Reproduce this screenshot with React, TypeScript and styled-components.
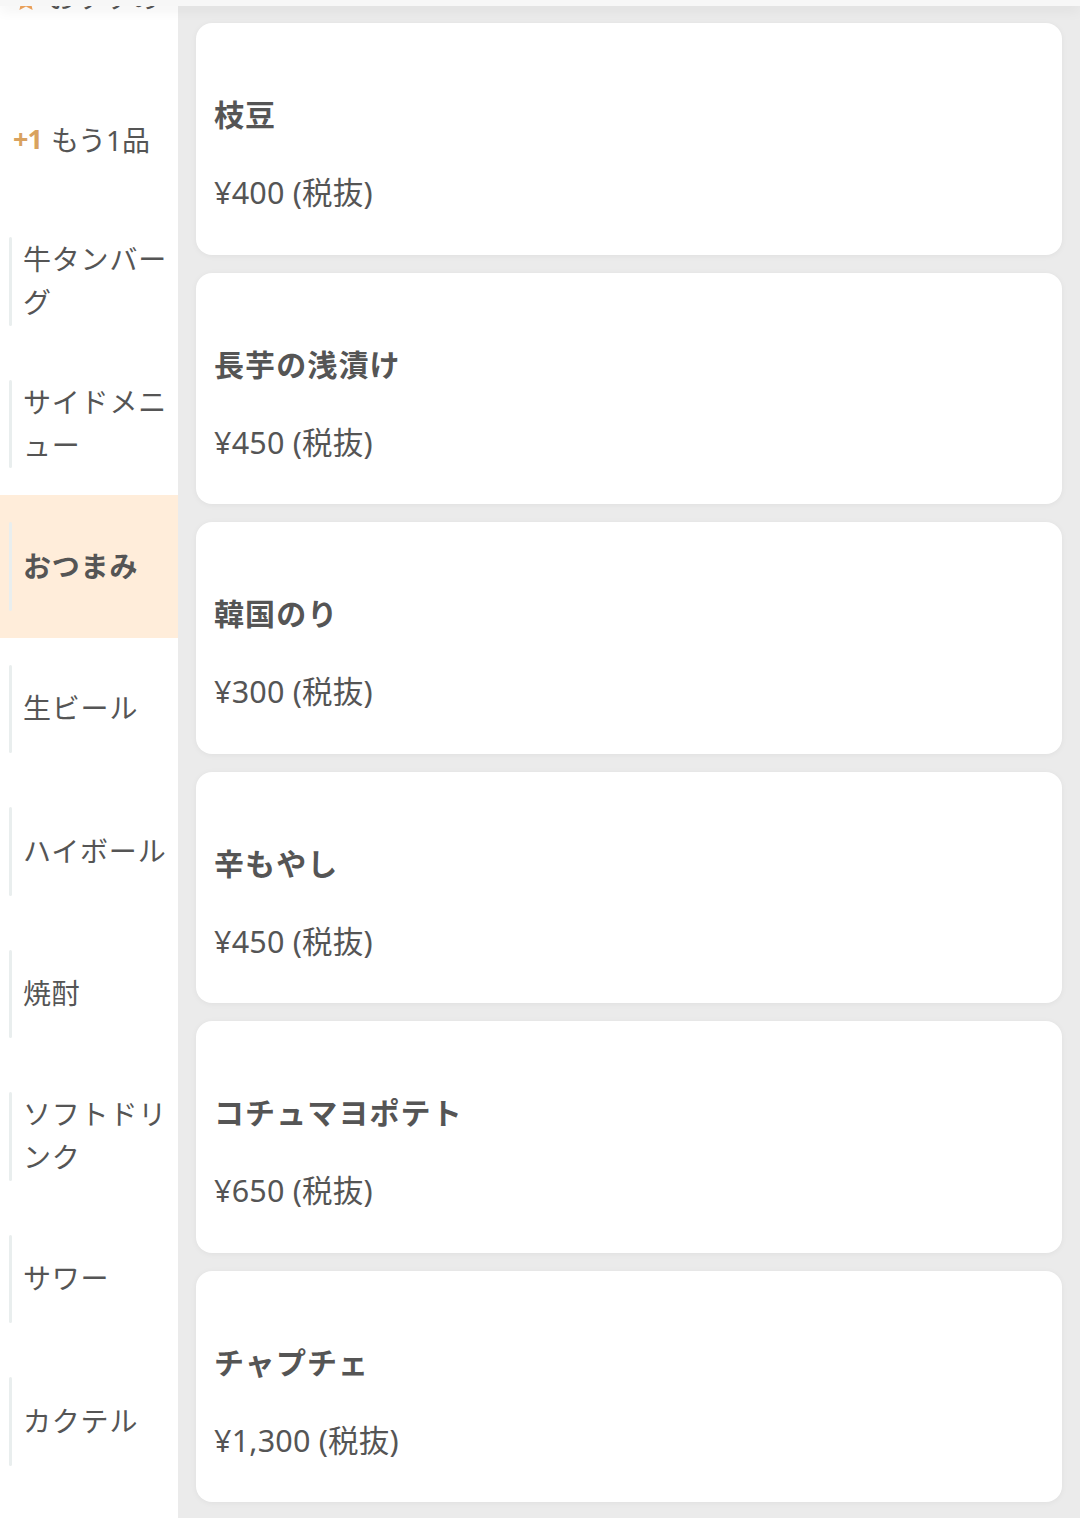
import React from "react";
import styled, { createGlobalStyle } from "styled-components";

const GlobalStyle = createGlobalStyle`
  html, body { margin: 0; padding: 0; }
  body {
    background: #ebebeb;
    font-family: "Noto Sans", "Noto Sans CJK JP", sans-serif;
    color: #555;
    overflow: hidden;
  }
`;

const TopBar = styled.div`
  position: fixed;
  top: 0;
  left: 0;
  right: 0;
  height: 6px;
  background: #f7f7f7;
  box-shadow: 0 3px 14px rgba(0, 0, 0, 0.09);
  z-index: 10;
`;

const Page = styled.div`
  display: flex;
  width: 1080px;
  height: 1518px;
  overflow: hidden;
`;

const Sidebar = styled.nav`
  width: 178px;
  flex: none;
  background: #fff;
  display: flex;
  flex-direction: column;
  margin-top: -75px;
`;

const NavItem = styled.div<{ $active?: boolean }>`
  height: 142.5px;
  flex: none;
  box-sizing: border-box;
  padding: 27px 8px 27px 9px;
  display: flex;
  align-items: stretch;
  background: ${(p) => (p.$active ? "#ffedda" : "transparent")};
`;

const NavBorder = styled.div`
  width: 3px;
  border-radius: 2px;
  background: #e9eeee;
  flex: none;
`;

const NavLabel = styled.div<{ $active?: boolean }>`
  display: flex;
  align-items: center;
  padding-left: 11px;
  font-size: 28px;
  line-height: 43px;
  letter-spacing: 0.8px;
  font-weight: ${(p) => (p.$active ? 700 : 400)};
  color: #555;
`;

const SpecialItem = styled.div`
  height: 142.5px;
  flex: none;
  box-sizing: border-box;
  padding-left: 13px;
  display: flex;
  align-items: center;
  gap: 9px;
  font-size: 28px;
  color: #555;
`;

const PlusOne = styled.span`
  color: #d9a25f;
  font-weight: 700;
  font-size: 27px;
  letter-spacing: -1px;
`;

const StarBox = styled.span`
  display: inline-flex;
  width: 26px;
  height: 26px;
  margin-top: 10px;
  color: #f0a45c;
`;

const Main = styled.main`
  flex: 1;
  display: flex;
  flex-direction: column;
  gap: 18px;
  padding: 23px 18px 0 18px;
  background: #ebebeb;
`;

const Card = styled.div`
  height: 231.5px;
  flex: none;
  box-sizing: border-box;
  background: #fff;
  border-radius: 16px;
  box-shadow: 0 1px 6px rgba(0, 0, 0, 0.05);
  padding: 0 18px;
  display: flex;
  flex-direction: column;
`;

const Title = styled.div`
  margin-top: 70px;
  font-size: 30px;
  line-height: 44px;
  font-weight: 700;
  letter-spacing: 1.1px;
  color: #555;
`;

const Price = styled.div`
  margin-top: 34px;
  font-size: 30.5px;
  line-height: 42px;
  letter-spacing: 0.2px;
  color: #555;
`;

const Star = () => (
  <svg viewBox="0 0 24 24" width="26" height="26" fill="currentColor">
    <path d="M12 2l2.9 6.3 6.9.7-5.2 4.6 1.5 6.8L12 17l-6.1 3.4 1.5-6.8L2.2 9l6.9-.7z" />
  </svg>
);

const categories = [
  "牛タンバーグ",
  "サイドメニュー",
  "おつまみ",
  "生ビール",
  "ハイボール",
  "焼酎",
  "ソフトドリンク",
  "サワー",
  "カクテル",
];

const items = [
  { name: "枝豆", price: "¥400 (税抜)" },
  { name: "長芋の浅漬け", price: "¥450 (税抜)" },
  { name: "韓国のり", price: "¥300 (税抜)" },
  { name: "辛もやし", price: "¥450 (税抜)" },
  { name: "コチュマヨポテト", price: "¥650 (税抜)" },
  { name: "チャプチェ", price: "¥1,300 (税抜)" },
];

export default function App() {
  return (
    <>
      <GlobalStyle />
      <TopBar />
      <Page>
        <Sidebar>
          <SpecialItem>
            <StarBox>
              <Star />
            </StarBox>
            <span>おすすめ</span>
          </SpecialItem>
          <SpecialItem>
            <PlusOne>+1</PlusOne>
            <span>もう1品</span>
          </SpecialItem>
          {categories.map((c) => (
            <NavItem key={c} $active={c === "おつまみ"}>
              <NavBorder />
              <NavLabel $active={c === "おつまみ"}>{c}</NavLabel>
            </NavItem>
          ))}
        </Sidebar>
        <Main>
          {items.map((it) => (
            <Card key={it.name}>
              <Title>{it.name}</Title>
              <Price>{it.price}</Price>
            </Card>
          ))}
        </Main>
      </Page>
    </>
  );
}
